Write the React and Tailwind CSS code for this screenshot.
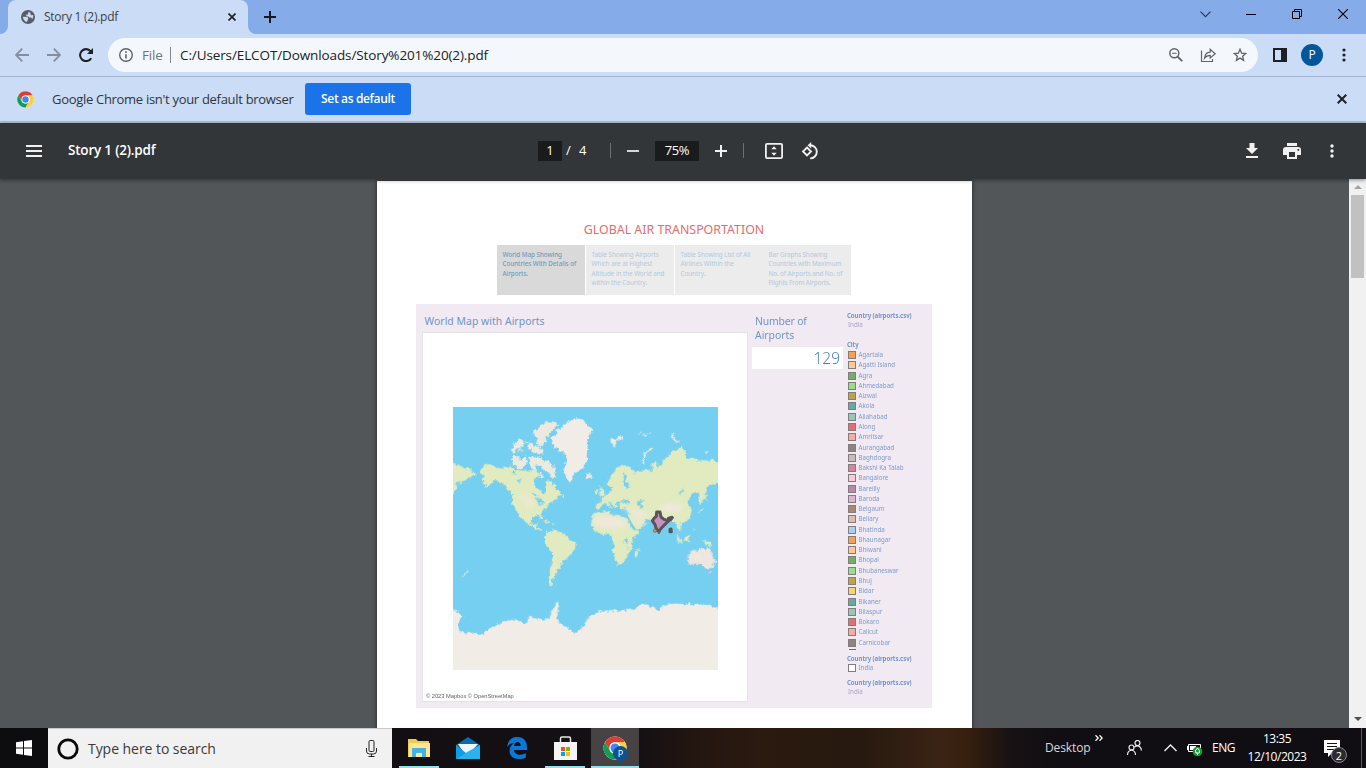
import React from "react";

const cities = [
  ["Agartala", "#f7a14e"], ["Agatti Island", "#ffc794"], ["Agra", "#73b066"], ["Ahmedabad", "#98dd8a"],
  ["Aizwal", "#bfa347"], ["Akola", "#65aaa6"], ["Allahabad", "#95c7bf"], ["Along", "#e66e70"],
  ["Amritsar", "#ffa9a5"], ["Aurangabad", "#8e8580"], ["Baghdogra", "#c5bdba"], ["Bakshi Ka Talab", "#d9829f"],
  ["Bangalore", "#facada"], ["Bareilly", "#b78aaa"], ["Baroda", "#dab3d8"], ["Belgaum", "#aa8974"],
  ["Bellary", "#dabfae"], ["Bhatinda", "#a8cfee"], ["Bhaunagar", "#f7a14e"], ["Bhiwani", "#ffc794"],
  ["Bhopal", "#73b066"], ["Bhubaneswar", "#98dd8a"], ["Bhuj", "#bfa347"], ["Bidar", "#f3d574"],
  ["Bikaner", "#65aaa6"], ["Bilaspur", "#95c7bf"], ["Bokaro", "#e66e70"], ["Calicut", "#ffa9a5"],
  ["Carnicobar", "#8e8580"],
];

const steps = [
  { lines: ["World Map Showing", "Countries With Details of", "Airports."], box: "w-[88px] bg-[#d9d9d9] text-[#7499c4] font-medium tracking-[-0.05px] mr-px" },
  { lines: ["Table Showing Airports", "Which are at Highest", "Altitude in the World and", "within the Country."], box: "w-[88px] bg-[#ececec] text-[#b3c8dd] tracking-[-0.04px] mr-px" },
  { lines: ["Table Showing List of All", "Airlines Within the", "Country."], box: "w-[88px] bg-[#ececec] text-[#b3c8dd] tracking-[-0.04px]" },
  { lines: ["Bar Graphs Showing", "Countries with Maximum", "No. of Airports and No. of", "Flights From Airports."], box: "w-[88px] bg-[#ececec] text-[#b3c8dd] tracking-[-0.08px]" },
];

function ChromeLogo({ className }) {
  return (
    <svg className={className} viewBox="0 0 48 48">
      <circle cx="24" cy="24" r="23" fill="#fff" />
      <path d="M4 12.5A23 23 0 0 1 44 12.5H24A11.5 11.5 0 0 0 14 18.3V29.8Z" fill="#e33b2e" />
      <path d="M4 12.5A23 23 0 0 0 24 47L34 29.7A11.5 11.5 0 0 1 14 29.7Z" fill="#109d58" />
      <path d="M44 12.5A23 23 0 0 1 24 47L34 29.7A11.5 11.5 0 0 0 24 12.5Z" fill="#ffcd40" />
      <circle cx="24" cy="24" r="11.5" fill="#fff" />
      <circle cx="24" cy="24" r="9" fill="#4285f4" />
    </svg>
  );
}

function TabStrip() {
  return (
    <div className="flex h-[34px] bg-[#85abe9]">
      <div className="flex w-2 items-end bg-[#cbdcf6]"><div className="h-[34px] w-2 rounded-br-lg bg-[#85abe9]" /></div>
      <div className="h-[34px] bg-[#85abe9]">
        <div className="flex h-[34px] w-[240px] items-center rounded-t-lg bg-[#cbdcf6] pl-[13px]">
          <svg className="size-[14px]" viewBox="0 0 14 14">
            <circle cx="7" cy="7" r="7" fill="#595e65" />
            <path d="M2.2 6.8 5.5 7c1.7.2 2 1.3 1.5 2.3L5.9 12A5.3 5.3 0 0 1 2 6.8ZM7.4 2.1 7 4.4H5.2l.2 2h2l1 1.2 1.8-.1.9 1.6 1-1.5V5l-1.8.2-.9-1 .1-1.4Z" fill="#cbdcf6" />
          </svg>
          <span className="ml-[9px] w-[176px] text-[12px] leading-[16px] tracking-[-0.26px] text-[#3b4149]">Story 1 (2).pdf</span>
          <svg className="ml-[8px] size-[8px]" viewBox="0 0 8 8"><path d="m.5.5 7 7m0-7-7 7" stroke="#1f2328" strokeWidth="1.7" /></svg>
        </div>
      </div>
      <div className="w-2 bg-[#cbdcf6]"><div className="h-[34px] w-2 rounded-bl-lg bg-[#85abe9]" /></div>
      <svg className="mt-[11px] ml-[8px] size-[12px]" viewBox="0 0 12 12"><path d="M6 0v12M0 6h12" stroke="#16191d" strokeWidth="2" /></svg>
      <div className="flex-1" />
      <svg className="mt-[11px] mr-[35px] h-[7px] w-[11px]" viewBox="0 0 11 7"><path d="m.5.7 5 5 5-5" fill="none" stroke="#26374f" strokeWidth="1.1" /></svg>
      <div className="mt-[14px] mr-[36px] h-px w-[10px] bg-black" />
      <svg className="mt-[9px] mr-[36px] size-[10px]" viewBox="0 0 10 10"><path d="M.5 2.5h7v7h-7ZM2.5 2.5v-2h7v7h-2" fill="none" stroke="#000" /></svg>
      <svg className="mt-[9px] mr-[18px] size-[10px]" viewBox="0 0 10 10"><path d="m0 0 10 10m0-10L0 10" stroke="#000" strokeWidth="1.1" /></svg>
    </div>
  );
}

function AddressBar() {
  return (
    <div className="flex h-[43px] items-center border-b border-[#a1b2d1] bg-[#cbdcf6] pl-[15px]">
      <svg className="size-[14px]" viewBox="0 0 14 14"><path d="M14 7H1M7.2.7.9 7l6.3 6.3" fill="none" stroke="#838e9f" strokeWidth="1.8" /></svg>
      <svg className="ml-[18px] size-[14px]" viewBox="0 0 14 14"><path d="M0 7h13M6.8.7 13.1 7l-6.3 6.3" fill="none" stroke="#838e9f" strokeWidth="1.8" /></svg>
      <svg className="ml-[18px] size-[14px]" viewBox="0 0 14 14"><path d="M12.2 10.2A6 6 0 1 1 11.7 3.3" fill="none" stroke="#1d2127" strokeWidth="2.1" /><path d="M14 0v6H8Z" fill="#1d2127" /></svg>
      <div className="ml-[15px] flex h-[34px] w-[1150px] items-center rounded-full bg-[#f4f8fd] pl-[11px]">
        <svg className="size-[14px]" viewBox="0 0 14 14"><circle cx="7" cy="7" r="6.3" fill="none" stroke="#5f6368" strokeWidth="1.4" /><path d="M7 6.2v4.3M7 3.3v1.6" stroke="#5f6368" strokeWidth="1.6" /></svg>
        <span className="ml-[9px] w-[21px] text-[13.5px] leading-[18px] tracking-[-0.2px] text-[#70757a]">File</span>
        <div className="ml-[7px] h-[16px] w-px bg-[#84888e]" />
        <span className="ml-[9px] w-[310px] whitespace-nowrap text-[13.5px] leading-[18px] tracking-[-0.11px] text-[#202124]">C:/Users/ELCOT/Downloads/Story%201%20(2).pdf</span>
        <div className="flex-1" />
        <svg className="size-[14px]" viewBox="0 0 14 14"><circle cx="5.3" cy="5.3" r="4.5" fill="none" stroke="#5f6368" strokeWidth="1.5" /><path d="M8.6 8.6 13.2 13.2" stroke="#5f6368" strokeWidth="1.9" /><path d="M3 5.3h4.6" stroke="#5f6368" /></svg>
        <svg className="ml-[17px] h-[15px] w-[17px]" viewBox="0 0 17 15"><path d="M1.5 2.5v11h11V11M4.5 10.2c.4-3.8 2.4-5.8 5.7-6V1.3l5 4.5-5 4.2V7.3c-2.6 0-4.2.8-5.7 2.9Z" fill="none" stroke="#5f6368" strokeWidth="1.2" /></svg>
        <svg className="mr-[11px] ml-[16px] size-[14px]" viewBox="0 0 14 14"><path d="m7 1.3 1.6 3.9 4.2.3-3.2 2.7 1 4.1L7 10.1l-3.6 2.2 1-4.1-3.2-2.7 4.2-.3Z" fill="none" stroke="#5f6368" strokeWidth="1.3" /></svg>
      </div>
      <svg className="ml-[15px] size-[14px]" viewBox="0 0 14 14"><path d="M0 0h14v14H0ZM2 2v10h6V2Z" fill="#1d2127" fillRule="evenodd" /></svg>
      <div className="ml-[14px] flex size-[22px] items-center justify-center rounded-full bg-[#01579b] text-[12px] text-white">P</div>
      <svg className="ml-[19px] h-[14px] w-[4px]" viewBox="0 0 4 14"><g fill="#1d2127"><circle cx="2" cy="2" r="1.6" /><circle cx="2" cy="7" r="1.6" /><circle cx="2" cy="12" r="1.6" /></g></svg>
    </div>
  );
}

function InfoBar() {
  return (
    <div className="flex h-[46px] items-center border-b-2 border-[#b6c2d6] bg-[#cbdcf6] pl-[17px]">
      <ChromeLogo className="size-[17px]" />
      <span className="ml-[18px] w-[241px] whitespace-nowrap text-[13px] leading-[18px] tracking-[-0.3px] text-[#30353c]">Google Chrome isn&apos;t your default browser</span>
      <button className="ml-[12px] flex h-[32px] w-[106px] items-center justify-center rounded-[3px] bg-[#1a73e8] text-[12px] font-semibold tracking-[-0.35px] text-white">Set as default</button>
      <div className="flex-1" />
      <svg className="mr-[19px] size-[10px]" viewBox="0 0 10 10"><path d="m.7.7 8.6 8.6m0-8.6L.7 9.3" stroke="#1d2127" strokeWidth="2" /></svg>
    </div>
  );
}

function PdfToolbar() {
  return (
    <div className="relative z-10 flex h-[56px] items-center bg-[#323639] pb-px pl-[26px] text-white shadow-[0_1px_4px_rgba(0,0,0,0.45)]">
      <svg className="h-[12px] w-[16px]" viewBox="0 0 16 12"><path d="M0 1h16M0 6h16M0 11h16" stroke="#f1f1f1" strokeWidth="2" /></svg>
      <span className="ml-[26px] w-[470px] text-[13.5px] font-semibold tracking-[-0.2px]">Story 1 (2).pdf</span>
      <div className="flex h-[20px] w-[24px] items-center justify-center bg-[#191b1c] text-[13px]">1</div>
      <span className="ml-[4px] w-[13px] text-[13px]">/</span>
      <span className="w-[31px] text-[13px]">4</span>
      <div className="h-[15px] w-px bg-[#6d7073]" />
      <div className="ml-[16px] h-[2px] w-[12px] bg-[#d6d7d7]" />
      <div className="ml-[16px] flex h-[20px] w-[44px] items-center justify-center bg-[#191b1c] text-[13px] tracking-[-0.4px]">75%</div>
      <svg className="ml-[16px] size-[12px]" viewBox="0 0 12 12"><path d="M6 0v12M0 6h12" stroke="#f1f1f1" strokeWidth="2" /></svg>
      <div className="ml-[16px] h-[15px] w-px bg-[#6d7073]" />
      <svg className="ml-[21px] h-[16px] w-[18px]" viewBox="0 0 18 16"><rect x=".9" y=".9" width="16.2" height="14.2" rx="1.2" fill="none" stroke="#f1f1f1" strokeWidth="1.8" /><path d="m9 3.2 2.7 3H6.3ZM9 12.8l2.7-3H6.3Z" fill="#f1f1f1" /></svg>
      <svg className="ml-[18px] h-[18px] w-[18px]" viewBox="0 0 18 18"><path d="m6 5.5 4 4-4 4-4-4Z" fill="none" stroke="#f1f1f1" strokeWidth="1.8" /><path d="M9.2 3.2a6.6 6.6 0 1 1 0 13.2" fill="none" stroke="#f1f1f1" strokeWidth="1.9" /><path d="M10.2 0v6.5L6.6 3.2Z" fill="#f1f1f1" /></svg>
      <div className="flex-1" />
      <svg className="mr-[25px] h-[15px] w-[12px]" viewBox="0 0 12 15"><path d="M3.5 0h5v5H12l-6 6-6-6h3.5ZM0 13h12v2H0Z" fill="#f1f1f1" /></svg>
      <svg className="mr-[29px] h-[16px] w-[18px]" viewBox="0 0 18 16"><path d="M4 0h10v3H4ZM3 4h12q3 0 3 3v5h-4v4H4v-4H0V7q0-3 3-3ZM6 9v5h6V9ZM14.5 6v1.7h1.7V6Z" fill="#f1f1f1" fillRule="evenodd" /></svg>
      <svg className="mr-[32px] h-[14px] w-[4px]" viewBox="0 0 4 14"><g fill="#f1f1f1"><circle cx="2" cy="2" r="1.7" /><circle cx="2" cy="7" r="1.7" /><circle cx="2" cy="12" r="1.7" /></g></svg>
    </div>
  );
}

function WorldMap() {
  return (
    <svg className="h-[263px] w-[265px]" viewBox="39 21 795 789">
      <defs>
        <filter id="coast" x="-5%" y="-5%" width="110%" height="110%">
          <feTurbulence type="fractalNoise" baseFrequency="0.085" numOctaves="3" seed="4" />
          <feDisplacementMap in="SourceGraphic" scale="17" xChannelSelector="R" yChannelSelector="G" />
        </filter>
        <filter id="soft" x="-40%" y="-40%" width="180%" height="180%"><feGaussianBlur stdDeviation="6" /></filter>
      </defs>
      <rect x="39" y="21" width="795" height="789" fill="#75cff0" />
      <g filter="url(#coast)">
        <g fill="#e1ebbf">
          <path d="M30 190 60 196 75 205 85 203 95 212 111 220 102 228 90 232 75 242 58 246 45 250 52 258 46 272 38 280Z" />
          <path d="M122 210 135 195 150 192 165 200 185 203 200 203 213 200 222 206 240 212 262 212 280 210 294 214 298 226 286 236 281 250 288 262 300 268 310 282 318 280 320 262 316 245 325 240 335 250 345 255 352 270 362 275 364 284 350 290 355 294 345 300 340 302 330 310 322 318 318 325 308 335 303 342 308 352 306 362 300 350 290 347 275 352 272 365 278 377 285 370 293 370 292 382 302 386 304 396 296 390 285 385 268 377 255 368 245 355 235 340 222 318 216 300 217 285 205 265 190 252 175 245 160 243 145 258 135 266 142 253 130 248 125 235 135 228 122 222Z" />
          <path d="M312 408 325 393 345 388 360 395 380 405 387 416 395 425 411 432 402 452 385 470 370 485 358 505 350 515 345 530 335 540 340 560 328 555 325 535 333 500 338 475 335 455 318 435 312 418Z" />
        </g>
        <path d="M405 55 425 58 440 73 460 90 445 108 443 140 440 165 442 180 430 200 418 212 405 220 395 235 390 248 380 235 372 215 375 195 380 175 375 160 355 150 345 140 332 130 335 115 350 105 345 92 370 80 385 65Z" fill="#f1ece6" />
        <g fill="#ece9df">
          <path d="m300 75 20-10 24 0 8 10-14 14-10 16-12 6 4 12-14 16-16-8 2-16-14-14 4-14 14 2Z" />
          <path d="m238 115 12 6 4 14-12 8-14 4-8 12-4-12 8-16ZM272 126l10 12-2 12-18-4ZM284 138l14 2 14 14-8 10-22-4-6-12ZM218 166l14 4 14 10 8-12 8 12-6 22-20 4-10-8-12-4ZM266 172l12-6 10 6-4 26 8 16-16-6-8-14ZM298 168l14 14 14 0 10 16 14 6-8 10 8 20-12 0-12-14-14-8-12-16-14-2-2-16Z" />
          <path d="m256 122 14 3-10 4ZM242 146l10 8-22 0ZM300 218l12 8-6 8-8-6ZM438 222l18 4-2 7-14 0Z" />
        </g>
        <path d="m306 364 14-2 14 6-14 1ZM336 371l10 0-1 4-9-1ZM310 345l4 4-3 2ZM362 291l10-8 0 8Z" fill="#e1ebbf" />
        <g transform="translate(420 0)" fill="#e1ebbf">
          <path d="M82 250 90 230 105 210 125 195 145 198 158 210 163 222 180 212 205 208 218 215 215 190 225 178 232 190 230 205 240 195 250 180 270 160 290 148 305 140 315 155 318 175 335 173 350 178 370 185 395 180 430 190 430 246 395 252 380 262 377 290 362 315 355 300 360 280 345 275 330 290 324 310 335 325 332 345 318 365 300 372 302 385 308 395 295 387 288 372 280 365 268 355 250 375 238 400 228 380 220 360 205 355 195 357 198 370 182 382 165 390 150 365 143 345 150 335 135 328 118 325 115 312 130 307 150 310 144 296 125 305 112 305 110 320 104 326 96 313 85 302 92 320 95 328 84 318 74 307 60 325 50 328 50 312 65 308 62 295 75 286 92 276 100 262 90 264Z" />
          <path d="M40 340 60 335 86 333 90 345 110 348 130 350 142 356 150 375 160 390 180 390 174 402 158 418 155 430 158 445 142 468 130 490 112 495 105 475 97 455 102 435 95 410 90 402 62 402 44 395 33 375 35 355Z" />
          <path d="m60 255 6 12 10 12-5 6-16 2 6-10ZM48 268l8 2-4 14-8-2ZM168 450l10-4-3 18-8 10-6-8ZM372 322l-6 12-12 4 2-6 12-6ZM375 292l9 8-8 2ZM288 402l16 22 0 10-10-12ZM312 412l18-10-4 22-12-2ZM338 380l6 10-5 4ZM365 420l26 8 6 12-16-4Z" />
          <path d="m322 466 12-10 16-4 16-10 10 10 6-13 14 23 10 20-10 22-18 2-14-12-20-4-18 6ZM388 515l7 0-4 7Z" fill="#eee6df" />
        </g>
        <g transform="translate(420 0)" fill="#f0eae0">
          <path d="m92 114 10 2 4 5 18-14 2 10-16 6-6 20-5-8-8-10ZM272 98l8 2 3 12 14 16-7 0-13-14ZM370 156l16 1-2 5-10-3ZM176 99l8 0-4 4ZM190 102l9-2-2 5-7 1ZM205 96l9-1-4 6-5 0Z" />
          <path d="m216 146-21 16-6 28" fill="none" stroke="#f0eae0" strokeWidth="6" />
          <path d="M20 222 36 223 34 232 22 234Z" />
        </g>
        <path d="m67 528 12-12 5-8 3 5-9 9-12 12Z" fill="#e1ebbf" />
        <path d="M30 625 55 637 70 648 60 660 52 670 58 693 85 699 128 705 140 690 160 680 185 668 210 660 240 663 262 672 265 647 290 655 315 659 330 652 330 635 342 625 348 605 355 606 352 655 358 670 380 680 395 697 410 698 430 678 440 660 455 645 480 635 520 633 575 629 600 618 610 612 640 622 655 631 670 618 700 610 740 613 790 613 855 630 855 835 20 835Z" fill="#f1ece6" />
        <g fill="#75cff0">
          <path d="m214 214 14 0 4 8-18 2ZM230 240l18-4-6 9-10 2ZM272 276l10 2 12 12-10 0ZM286 292l22 6 4 16-10-6-4 8-6-10ZM556 262l-8-18 4-24 8 2-2 22 12 10-14 12Z" />
          <path d="m594 300 14 2-4 14 6 14-10-4ZM716 282l12-14 3 3-10 12ZM553 420l10-6 2 12-10 4ZM560 432l5 14-3 2Z" />
        </g>
      </g>
      <g filter="url(#soft)" fill="#f1e8df" opacity=".9">
        <path d="m464 348 55 0 30 10 16 24-60 4-46-12ZM568 345l20 10 24 8-16 16ZM650 320l40-10 42 4-10 20-40 4ZM338 480l6 0 0 44-6 4Z" />
        <path d="m230 282 34 4 24 28-20 14Z" opacity=".6" />
        <path d="m545 325 60 8 30 8-30 14-44-20ZM754 455l30 4 6 24-32-4Z" />
      </g>
      <path d="m562 350 12 22 12 18" fill="none" stroke="#75cff0" strokeWidth="5" />
      <g stroke="#59535a" strokeLinejoin="round">
        <path d="m650 336 10 0 3 15 9 7 14 4-8 8-8 8-9 10-4 7-7-6-5-15-8-12 7-9 5-4Z" fill="#c294bb" strokeWidth="9" />
        <path d="m684 354 12-4 3 3-7 8-9 2Z" fill="#59535a" strokeWidth="6" />
        <path d="m690 388 3-1 1 8-4 0Z" fill="#59535a" strokeWidth="9" />
      </g>
      <circle cx="645" cy="392" r="5" fill="#da9351" stroke="#625a50" strokeWidth="2" />
      <circle cx="657" cy="398" r="4" fill="#686263" />
    </svg>
  );
}

function Heading({ children }) {
  return <div className="h-[9px] whitespace-nowrap text-[6.1px] leading-[9px] font-bold tracking-[-0.06px] text-[#7395c4]">{children}</div>;
}

function LegendRow({ name, color }) {
  return (
    <div className="flex h-[10.28px] items-center pl-px">
      <div className="flex size-[8px] border border-[#837c7d]" style={{ backgroundColor: color }} />
      <span className="ml-[2.5px] text-[6.2px] leading-[10px] whitespace-nowrap text-[#7e9bc8]">{name}</span>
    </div>
  );
}

function Dashboard() {
  return (
    <div className="mt-[9px] ml-[39px] flex h-[404px] w-[516px] bg-[#f1eaf3] text-[#7094c3]">
      <div className="w-[332px] pl-[6px]">
        <div className="h-[28px] pt-[9px] pl-[2.5px] text-[10.4px] leading-[16px] tracking-[0.04px]">World Map with Airports</div>
        <div className="h-[370px] w-[326px] border border-[#e6e2e8] bg-white pt-[74px] pl-[30px]">
          <WorldMap />
          <div className="mt-[21px] -ml-[27px] font-['Liberation_Sans'] text-[5.7px] leading-[10px] text-[#5e6065]">© 2023 Mapbox © OpenStreetMap</div>
        </div>
      </div>
      <div className="ml-[4px] w-[91px]">
        <div className="h-[43px] pt-[10px] pl-[3px] text-[10.4px] leading-[14px] tracking-[-0.15px]">Number of<br /><span className="tracking-normal">Airports</span></div>
        <div className="h-[22px] bg-white pr-[3px] text-right text-[15.5px] leading-[22px] font-light text-[#4c7fba]">129</div>
      </div>
      <div className="ml-[4px] w-[84px] pt-[7px]">
        <Heading>Country (airports.csv)</Heading>
        <div className="h-[20px] pl-px text-[6.2px] leading-[9px] text-[#a9a4cf]">India</div>
        <Heading>City</Heading>
        <div className="h-px" />
        {cities.map(([name, color]) => <LegendRow key={name} name={name} color={color} />)}
        <div className="mt-[1px] ml-[2px] h-px w-[7px] bg-[#6f696a]" />
        <div className="h-[4.4px]" />
        <Heading>Country (airports.csv)</Heading>
        <LegendRow name="India" color="#ffffff" />
        <div className="h-[5px]" />
        <Heading>Country (airports.csv)</Heading>
        <div className="pl-px text-[6.2px] leading-[9px] text-[#a9a4cf]">India</div>
      </div>
    </div>
  );
}

function Viewer() {
  return (
    <div className="flex h-[549px] bg-[#525659]">
      <div className="flex-1 overflow-hidden pt-[2px] pl-[377px]">
        <div className="h-[560px] w-[595px] bg-white pt-[40px] font-['Noto_Sans',sans-serif] shadow-[0_0_4px_rgba(0,0,0,0.6)]">
          <div className="h-[24px] pr-[1px] text-center text-[12.4px] leading-[17px] text-[#e66b6c]">GLOBAL AIR TRANSPORTATION</div>
          <div className="ml-[120px] flex h-[50px]">
            {steps.map((s) => (
              <div key={s.lines[0]} className={`${s.box} h-[50px] pt-[5px] pl-[5.5px]`}>
                {s.lines.map((l) => <div key={l} className="h-[9.4px] text-[6.3px] leading-[9.4px] whitespace-nowrap">{l}</div>)}
              </div>
            ))}
          </div>
          <Dashboard />
        </div>
      </div>
      <div className="flex w-[17px] flex-col items-center bg-[#f1f1f1]">
        <svg className="mt-[6px] h-[4px] w-[8px]" viewBox="0 0 8 4"><path d="m4 0 4 4H0Z" fill="#a3a3a3" /></svg>
        <div className="mt-[6px] h-[83px] w-[13px] bg-[#c1c1c1]" />
        <div className="flex-1" />
        <svg className="mb-[7px] h-[4px] w-[8px]" viewBox="0 0 8 4"><path d="m4 4 4-4H0Z" fill="#505050" /></svg>
      </div>
    </div>
  );
}

function Taskbar() {
  return (
    <div className="flex h-[40px] bg-[linear-gradient(90deg,#0d0c0f_0px,#151013_640px,#241610_700px,#2a1a10_760px,#27190f_860px,#3a2314_940px,#38200f_965px,#171113_1010px,#100e12_1060px)] text-white">
      <div className="flex w-[48px] items-center justify-center">
        <svg className="size-[16px]" viewBox="0 0 16 16"><path d="m0 2.3 7-1v6.2H0ZM8 1.1 16 0v7.5H8ZM0 8.5h7v6.2l-7-1ZM8 8.5h8V16l-8-1.1Z" fill="#fff" /></svg>
      </div>
      <div className="flex w-[344px] items-center border-t border-[#c8c8c8] bg-[#f1f1f1] pl-[9px]">
        <svg className="size-[22px]" viewBox="0 0 22 22"><circle cx="11" cy="11" r="9.2" fill="none" stroke="#090909" strokeWidth="2.8" /></svg>
        <span className="ml-[9px] w-[260px] text-[14px] tracking-[-0.05px] text-[#3a3a3a]">Type here to search</span>
        <svg className="ml-[18px] h-[17px] w-[11px]" viewBox="0 0 11 17"><rect x="3" y=".5" width="5" height="11" rx="1.2" fill="none" stroke="#222" /><path d="M.5 8v3q0 3 3 3h4q3 0 3-3V8M5.5 14v2M2.5 16.5h6" fill="none" stroke="#222" /></svg>
      </div>
      <div className="ml-[7px] flex w-[40px] flex-col items-center justify-between border-b-2 border-[#88e5e9] pt-[10px]">
        <svg className="h-[20px] w-[22px]" viewBox="0 0 22 20"><path d="M0 1h8l2 2h11v16H0Z" fill="#f2c955" /><path d="M1 5h21v14H1Z" fill="#ffe791" /><path d="M4 10h14v9h-4v-4H8v4H4Z" fill="#42b3e7" /></svg>
      </div>
      <div className="ml-[9px] flex w-[40px] justify-center pt-[9px]">
        <svg className="h-[22px] w-[24px]" viewBox="0 0 24 22"><path d="M0 8 12 0l12 8v14H0Z" fill="#0869b9" /><path d="M2 7h20l-8 9H8Z" fill="#eef5fb" /><path d="m0 8 10 8L0 22Z" fill="#139ce0" /><path d="M24 8v14H0L13 14Z" fill="#27b3ef" /></svg>
      </div>
      <div className="ml-[9px] flex w-[40px] justify-center pt-[9px]">
        <svg className="h-[22px] w-[20px]" viewBox="0 0 20 22"><path d="M0 10C1 3 5 0 10.5 0 17 0 20 4.5 20 10v3H7c.2 3.2 3 4.7 6 4.7 2.3 0 4.3-.7 5.8-1.6v4.4c-2 1-4.5 1.5-7 1.5C6 22 2.5 18.700 2.500 14c0-3.800 2-6.500 5-8C4 6.200 1.500 7.500 0 10Zm7-1h6.700c0-2.600-1.200-4-3.200-4C8.500 5 7.300 6.700 7 9Z" fill="#0b78d7" /></svg>
      </div>
      <div className="ml-[8px] flex w-[40px] justify-center border-b-2 border-[#88e5e9] pt-[8px]">
        <svg className="h-[24px] w-[23px]" viewBox="0 0 23 24"><path d="M6.500 8V2.500q0-1.500 1.500-1.500h7q1.500 0 1.500 1.500V8" fill="none" stroke="#e8e8e8" strokeWidth="1.500" /><path d="M0 6h23v18H0Z" fill="#f4f4f4" /><path d="M7 11h4v4H7Z" fill="#f25022" /><path d="M12 11h4v4h-4Z" fill="#7fba00" /><path d="M7 16h4v4H7Z" fill="#00a4ef" /><path d="M12 16h4v4h-4Z" fill="#ffb900" /></svg>
      </div>
      <div className="ml-[6px] flex w-[48px] items-start justify-center border-b-2 border-[#88e5e9] bg-[#474344] pt-[8px]">
        <div className="relative size-[24px]">
          <ChromeLogo className="size-[24px]" />
          <div className="absolute top-[10px] left-[10px] flex size-[15px] items-center justify-center rounded-full bg-[#0b5394] text-[9px]">P</div>
        </div>
      </div>
      <div className="w-[406px]" />
      <span className="w-[50px] text-[12px] leading-[40px] tracking-[-0.1px] text-[#d9d9d9]">Desktop</span>
      <svg className="mt-[7px] h-[6px] w-[8px]" viewBox="0 0 8 6"><path d="m.5.300 2.700 2.700L.500 5.700M4.500.300l2.700 2.700-2.700 2.700" fill="none" stroke="#fff" strokeWidth="1.300" /></svg>
      <svg className="mt-[12px] ml-[24px] size-[15px]" viewBox="0 0 15 15"><g fill="none" stroke="#eee" strokeWidth="1.200"><circle cx="4.500" cy="7.500" r="2.500" /><circle cx="10.500" cy="3" r="2.500" /><path d="M.5 15q0-4 4-5 4 1 4 5M7.500 7q3-2.500 5.500 0 1.400 1.300 1.400 3.500" /></g></svg>
      <svg className="mt-[16px] ml-[22px] h-[8px] w-[13px]" viewBox="0 0 13 8"><path d="m.5 7 6-6 6 6" fill="none" stroke="#eee" strokeWidth="1.400" /></svg>
      <svg className="mt-[15px] ml-[10px] h-[14px] w-[16px]" viewBox="0 0 16 14"><path d="M1.500 1.500h12v7h-12Z" fill="none" stroke="#fff" /><path d="M0 3h1v4H0ZM3 3h6v4H3Z" fill="#fff" /><circle cx="10.500" cy="8.500" r="4.800" fill="#159b35" /><path d="M10.500 5q3 2.500 1.700 5H8.800Q7.500 7.500 10.500 5ZM10.500 10v2" fill="none" stroke="#fff" /></svg>
      <span className="ml-[9px] w-[25px] text-[12px] leading-[40px] tracking-[-0.5px]">ENG</span>
      <div className="ml-[8px] w-[64px] pt-[2px] text-center text-[12px] leading-[18px] tracking-[-0.480px] whitespace-nowrap">13:35<br />12/10/2023</div>
      <div className="relative mt-[12px] ml-[15px] h-[26px] w-[26px]">
        <svg className="h-[17px] w-[16px]" viewBox="0 0 16 17"><path d="M0 0h16v13H8l-4 4v-4H0Z" fill="#fff" /><path d="M3 3.500h10M3 6.500h10M3 9.500h7" stroke="#151518" /></svg>
        <div className="absolute top-[7px] left-[7px] flex size-[16px] items-center justify-center rounded-full border border-[#85868a] bg-[#2b2b2e] text-[11px] leading-none">2</div>
      </div>
      <div className="ml-auto w-[5px] border-l border-[#55565a]" />
    </div>
  );
}

export default function App() {
  return (
    <div className="h-[768px] w-[1366px] overflow-hidden font-['Open_Sans','Noto_Sans',sans-serif]">
      <TabStrip />
      <AddressBar />
      <InfoBar />
      <PdfToolbar />
      <Viewer />
      <Taskbar />
    </div>
  );
}
